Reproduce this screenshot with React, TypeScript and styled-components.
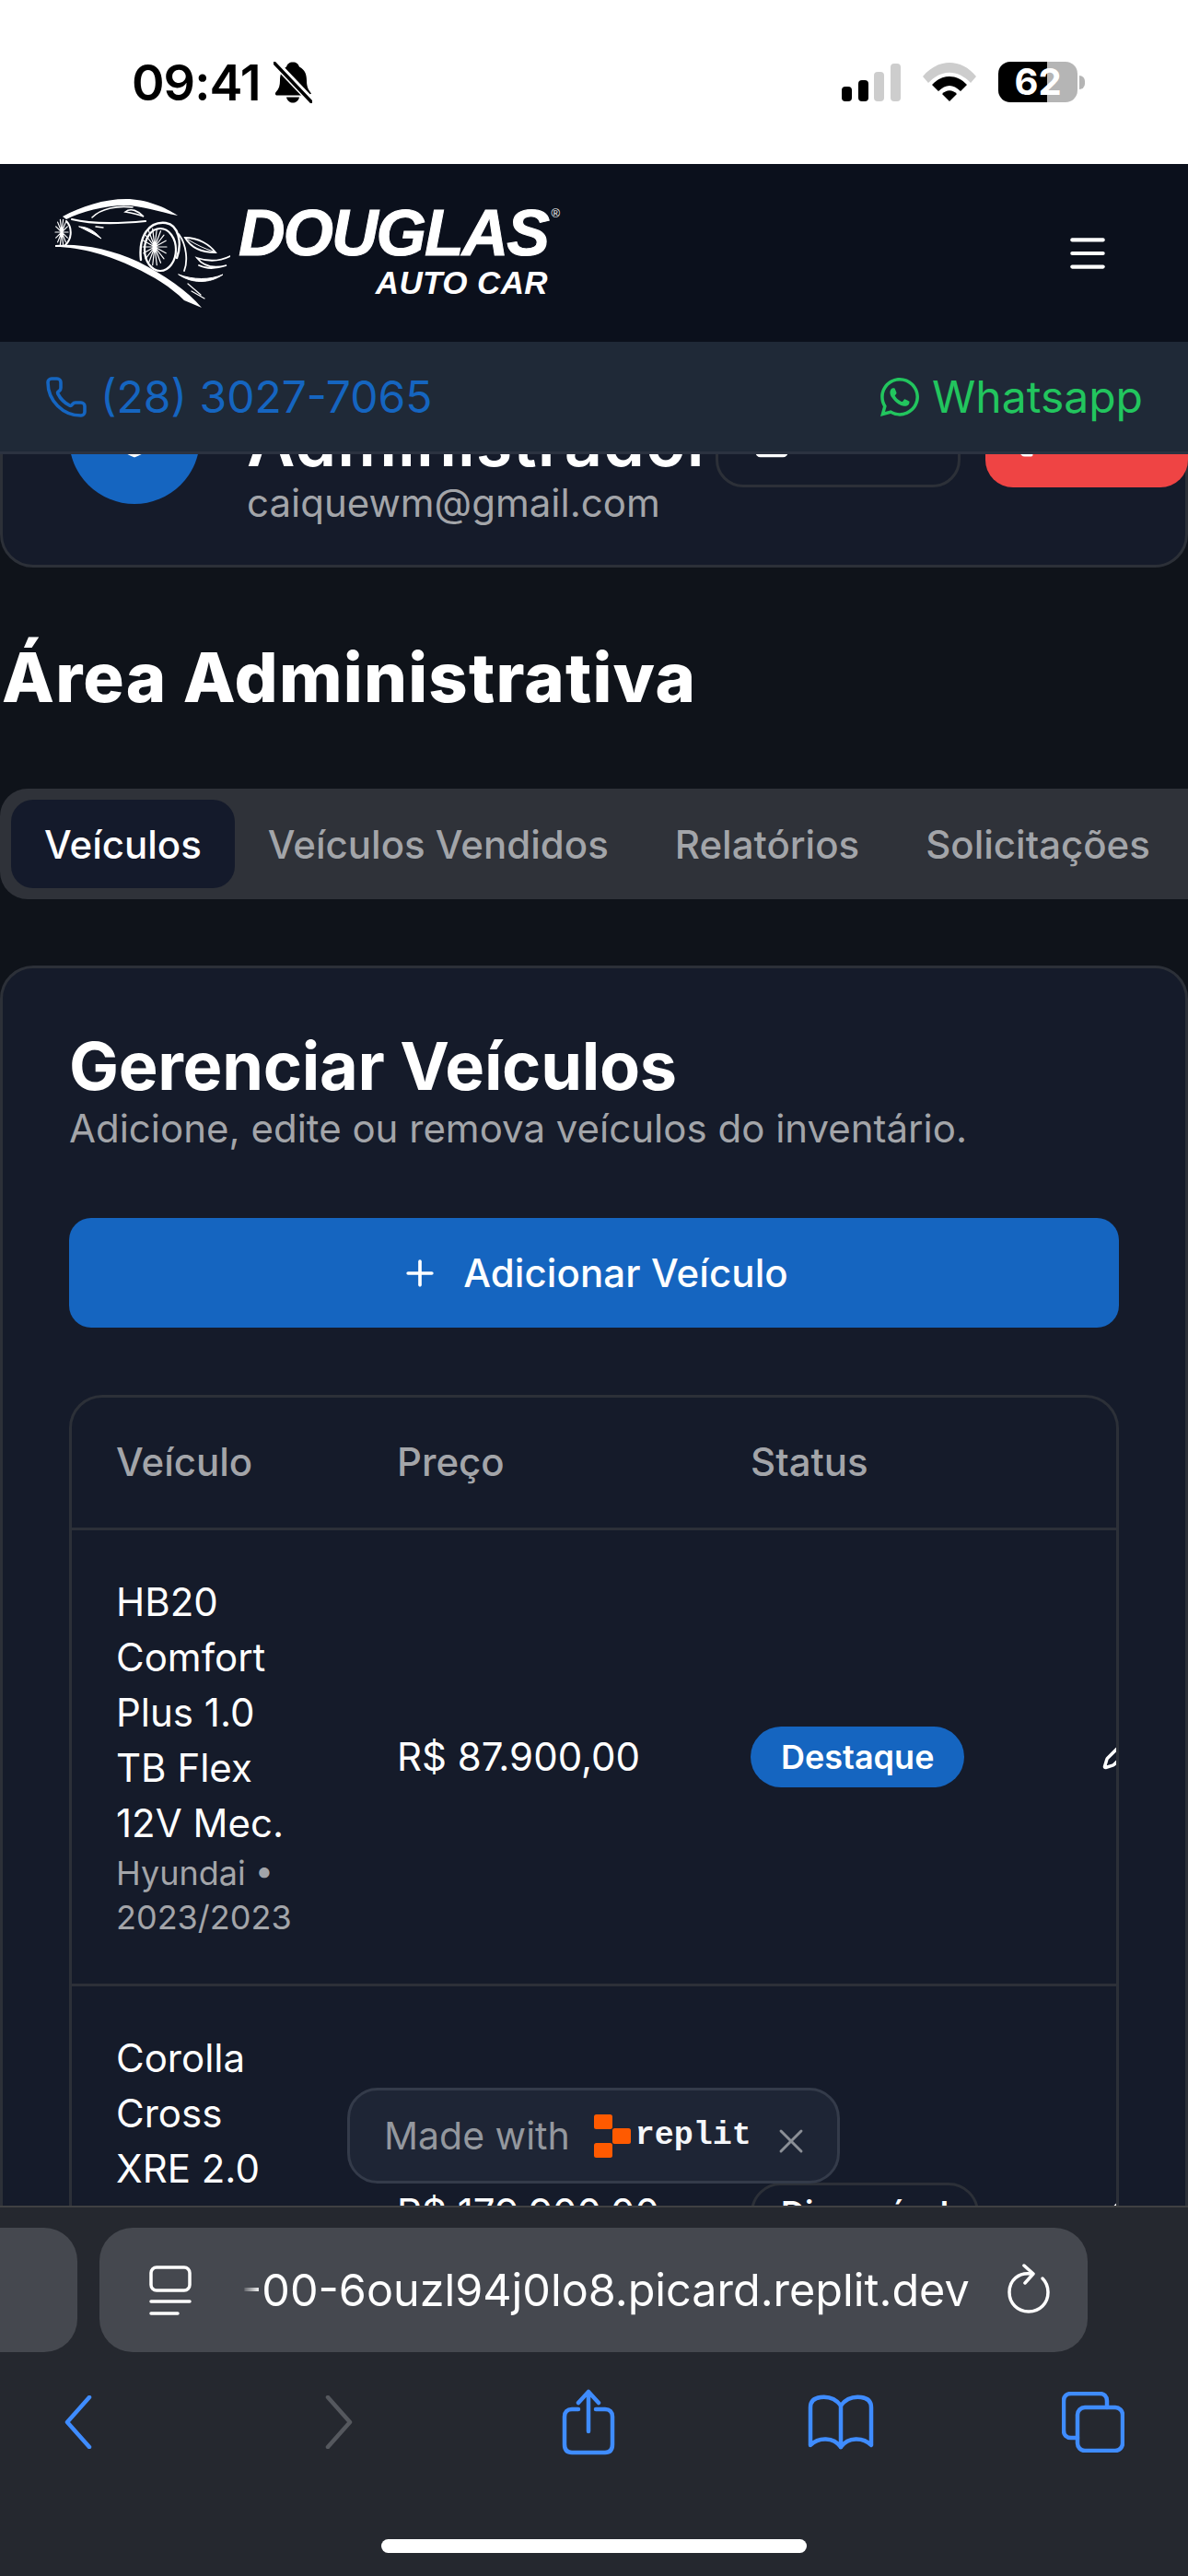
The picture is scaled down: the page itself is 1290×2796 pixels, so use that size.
import React from 'react';
import styled, { createGlobalStyle } from 'styled-components';
import { Lock, LogOut, Menu, Pencil, Phone, Plus, Shield, X } from 'lucide-react';
import { FaWhatsapp } from 'react-icons/fa';

const GlobalStyle = createGlobalStyle`
  html, body {
    margin: 0;
    padding: 0;
    background: #0f131a;
  }
  * {
    box-sizing: border-box;
  }
`;

const Screen = styled.div`
  position: relative;
  width: 1290px;
  height: 2796px;
  display: flex;
  flex-direction: column;
  overflow: hidden;
  background: #0f131a;
  color: #fff;
  font-family: Inter, 'Liberation Sans', sans-serif;
`;

const StatusBar = styled.div`
  height: 178px;
  flex: none;
  background: #fff;
  color: #000;
  display: flex;
  align-items: center;
  justify-content: space-between;
  padding: 0 112px 0 143px;
`;

const StatusGroup = styled.div<{ $gap: number }>`
  display: flex;
  align-items: center;
  gap: ${(p) => p.$gap}px;
`;

const Clock = styled.span`
  font-size: 54px;
  font-weight: 600;
  letter-spacing: -1px;
`;

const Battery = styled.div`
  position: relative;
  width: 86px;
  height: 44px;
  border-radius: 13px;
  overflow: hidden;
  background: linear-gradient(90deg, #000 0 62%, #b5b5b5 62% 100%);
  color: #fff;
  font-size: 40px;
  font-weight: 700;
  text-align: center;
  line-height: 44px;
`;

const BatteryNub = styled.div`
  width: 6px;
  height: 15px;
  margin-left: -22px;
  border-radius: 0 6px 6px 0;
  background: #b5b5b5;
`;

const Header = styled.header`
  height: 193px;
  flex: none;
  background: #0b101c;
  display: flex;
  align-items: center;
  justify-content: space-between;
  padding: 0 84px 0 58px;
`;

const Logo = styled.div`
  display: flex;
  align-items: center;
  gap: 9px;
`;

const Wordmark = styled.div`
  display: flex;
  flex-direction: column;
  align-items: flex-end;
  padding-top: 3px;
  font-family: 'Liberation Sans', Arial, sans-serif;
  font-weight: 700;
  font-style: italic;
`;

const WordmarkTop = styled.div`
  position: relative;
  font-size: 70px;
  line-height: 50px;
  letter-spacing: -2px;
  -webkit-text-stroke: 1px #fff;

  sup {
    position: absolute;
    top: -4px;
    right: -13px;
    font-size: 13px;
    line-height: 16px;
    font-style: normal;
    font-weight: 400;
    letter-spacing: 0;
    -webkit-text-stroke: 0;
  }
`;

const WordmarkBottom = styled.div`
  margin-top: 11px;
  font-size: 35px;
  line-height: 36px;
  letter-spacing: 0.4px;
`;

const MenuButton = styled.div`
  display: flex;
  color: #fff;
`;

const ContactBar = styled.div`
  height: 122px;
  flex: none;
  background: #1f2937;
  border-bottom: 3px solid #2b3240;
  display: flex;
  align-items: center;
  justify-content: space-between;
  padding: 0 49px 0 48px;
  font-size: 48px;
  position: relative;
  z-index: 2;
`;

const ContactLink = styled.div<{ $color: string; $gap: number }>`
  display: flex;
  align-items: center;
  gap: ${(p) => p.$gap}px;
  color: ${(p) => p.$color};
`;

const Main = styled.main`
  flex: 1;
  min-height: 0;
  overflow: hidden;
`;

const ProfileClip = styled.div`
  height: 123px;
  display: flex;
  flex-direction: column;
  justify-content: flex-end;
  overflow: hidden;
`;

const ProfileCard = styled.section`
  flex: none;
  height: 250px;
  background: #151b2a;
  border: 3px solid #2c3038;
  border-radius: 36px;
  display: flex;
  align-items: flex-start;
  padding: 36px 0 0 72px;
`;

const Avatar = styled.div`
  width: 142px;
  height: 142px;
  flex: none;
  border-radius: 50%;
  background: #1565c0;
  color: #fff;
  display: flex;
  align-items: center;
  justify-content: center;
`;

const ProfileInfo = styled.div`
  width: 509px;
  margin-left: 51px;
  padding-top: 40px;
  flex: none;
`;

const ProfileName = styled.div`
  font-size: 72px;
  line-height: 70px;
  margin-bottom: 1px;
  font-weight: 600;
  letter-spacing: 1px;
  white-space: nowrap;
`;

const ProfileEmail = styled.div`
  font-size: 42px;
  line-height: 60px;
  color: #a3a5a9;
`;

const ProfileActions = styled.div`
  display: flex;
  gap: 27px;
  flex: none;
  margin-top: 4px;
`;

const ProfileAction = styled.div<{ $danger?: boolean; $width: number }>`
  width: ${(p) => p.$width}px;
  height: 120px;
  border-radius: 30px;
  padding: ${(p) => (p.$danger ? '48px 0 0 34px' : '44px 0 0 37px')};
  color: #fff;
  background: ${(p) => (p.$danger ? '#ef4444' : 'transparent')};
  border: ${(p) => (p.$danger ? 'none' : '3px solid #2c3038')};
`;

const PageTitle = styled.h1`
  margin: 71px 0 0;
  padding-left: 2px;
  font-size: 74px;
  line-height: 96px;
  font-weight: 800;
  letter-spacing: 1.2px;
`;

const Tabs = styled.nav`
  margin-top: 73px;
  height: 120px;
  background: #2f3239;
  border-radius: 30px 0 0 30px;
  display: flex;
  align-items: center;
  padding-left: 12px;
`;

const Tab = styled.div<{ $active?: boolean }>`
  height: 96px;
  display: flex;
  align-items: center;
  padding: 0 36px;
  border-radius: 24px;
  font-size: 42px;
  font-weight: 500;
  white-space: nowrap;
  background: ${(p) => (p.$active ? '#141a2b' : 'transparent')};
  color: ${(p) => (p.$active ? '#fff' : '#a3a5a9')};
`;

const Panel = styled.section`
  margin-top: 72px;
  background: #151b2a;
  border: 3px solid #2c3038;
  border-radius: 36px;
  padding: 71px 72px 0;
`;

const PanelTitle = styled.h2`
  margin: 0;
  font-size: 72px;
  line-height: 70px;
  font-weight: 700;
  letter-spacing: -0.3px;
`;

const PanelSubtitle = styled.p`
  margin: 3px 0 0;
  font-size: 42px;
  line-height: 60px;
  color: #a3a5a9;
`;

const AddButton = styled.div`
  margin-top: 67px;
  height: 119px;
  background: #1565c0;
  border-radius: 24px;
  display: flex;
  align-items: center;
  justify-content: center;
  gap: 25px;
  font-size: 42px;
  font-weight: 500;
  letter-spacing: 0.1px;
`;

const TableFrame = styled.div`
  margin-top: 73px;
  border: 3px solid #2c3038;
  border-radius: 36px;
  overflow: hidden;
`;

const Table = styled.table`
  width: 1270px;
  table-layout: fixed;
  border-collapse: separate;
  border-spacing: 0;
`;

const HeadCell = styled.th`
  height: 144px;
  padding: 0 48px 2px;
  text-align: left;
  font-size: 42px;
  font-weight: 500;
  color: #a3a5a9;
  border-bottom: 3px solid #2c3038;
`;

const Cell = styled.td`
  padding: 48px;
  font-size: 42px;
  line-height: 60px;
  vertical-align: middle;
  border-bottom: 3px solid #2c3038;
`;

const VehicleName = styled.div`
  width: 195px;
`;

const Price = styled.span`
  white-space: nowrap;
`;

const VehicleMeta = styled.div`
  width: 195px;
  font-size: 36px;
  line-height: 48px;
  color: #a3a5a9;
`;

const Badge = styled.span<{ $outline?: boolean }>`
  display: inline-block;
  height: 66px;
  padding: 0 ${(p) => (p.$outline ? 30 : 33)}px;
  border-radius: 33px;
  font-size: 36px;
  font-weight: 600;
  line-height: ${(p) => (p.$outline ? 60 : 66)}px;
  white-space: nowrap;
  background: ${(p) => (p.$outline ? 'transparent' : '#1565c0')};
  border: ${(p) => (p.$outline ? '3px solid #2c3038' : 'none')};
`;

const MadeWith = styled.div`
  position: absolute;
  left: 377px;
  top: 2266px;
  width: 535px;
  height: 104px;
  background: #1e2535;
  border: 3px solid #343b4a;
  border-radius: 33px;
  display: flex;
  align-items: center;
  padding-left: 37px;
  font-size: 41px;
  color: #94989e;
  z-index: 3;
`;

const ReplitName = styled.span`
  margin-left: 5px;
  font-family: 'Liberation Mono', monospace;
  font-size: 35px;
  font-weight: 700;
  color: #f5f7fa;
`;

const MadeWithClose = styled.div`
  display: flex;
  margin-left: 21px;
  margin-top: 11px;
  color: #8b8f96;
`;

const Safari = styled.div`
  height: 402px;
  flex: none;
  background: #25282f;
  border-top: 2px solid #3f4042;
  position: relative;
  z-index: 2;
`;

const AddressRow = styled.div`
  margin-top: 22px;
  display: flex;
  gap: 24px;
`;

const TabSliver = styled.div`
  width: 84px;
  height: 135px;
  background: #45484f;
  border-radius: 0 36px 36px 0;
`;

const AddressBar = styled.div`
  width: 1073px;
  height: 135px;
  background: #45484f;
  border-radius: 36px;
  display: flex;
  align-items: center;
  padding-left: 54px;
`;

const AddressText = styled.div`
  width: 795px;
  margin-left: 54px;
  margin-right: 37px;
  font-size: 48.5px;
  white-space: nowrap;
  overflow: hidden;
  -webkit-mask-image: linear-gradient(90deg, transparent 0, #000 20px);
  mask-image: linear-gradient(90deg, transparent 0, #000 20px);
`;

const ToolbarIcons = styled.div`
  margin: 21px 0 0 -46px;
  height: 110px;
  display: grid;
  grid-template-columns: repeat(5, 274px);
  justify-items: center;
  align-items: center;
`;

const HomeIndicator = styled.div`
  width: 462px;
  height: 15px;
  margin: 72px auto 0;
  background: #fff;
  border-radius: 8px;
`;

function CarDrawing() {
  const spokes = (cx: number, cy: number, rx: number, ry: number, n: number) =>
    Array.from({ length: n }, (_, i) => {
      const a = (i / n) * Math.PI * 2;
      return `M${cx} ${cy}L${(cx + Math.cos(a) * rx).toFixed(1)} ${(cy + Math.sin(a) * ry).toFixed(1)}`;
    }).join('');
  return (
    <svg width="192" height="118" viewBox="0 0 192 118" fill="none" stroke="#fff" strokeLinecap="round">
      <path d="M10 19C30 8 55 0 79 0C100 0 122 9 135 18C115 14 95 7 78 7C55 7 30 14 14 22Z" fill="#fff" stroke="none" />
      <path d="M42 20C52 10 70 7 86 9" strokeWidth="1.6" />
      <path d="M78 14C84 9 92 13 98 19C90 16 84 15 78 14Z" strokeWidth="1.6" />
      <path d="M20 22C40 27 70 27 100 24" strokeWidth="2.2" />
      <path d="M28 30C38 30 46 36 52 43C44 38 36 34 28 30Z" fill="#fff" strokeWidth="1" />
      <path d="M46 30L54 31" strokeWidth="1.4" />
      <path d="M14 24C20 30 21 42 13 50" strokeWidth="2" />
      <path d={spokes(9, 36, 7, 14, 14)} strokeWidth="1.2" />
      <path d="M2 52C30 52 62 62 87 74C109 84 128 96 142 110L161 118C146 100 120 82 92 68C62 54 30 48 2 50Z" fill="#fff" stroke="none" />
      <path d="M150 100L164 108M146 92L160 104" strokeWidth="1.2" />
      <path d="M95 66C92 40 104 24 122 26C136 28 140 48 134 64" strokeWidth="2.4" />
      <ellipse cx="116" cy="55" rx="17" ry="23" strokeWidth="2.2" />
      <path d={spokes(110, 52, 13, 20, 18)} strokeWidth="1.2" />
      <path d="M143 42C158 42 170 50 176 58C162 58 150 54 143 42Z" strokeWidth="1.8" />
      <path d="M146 44C156 50 164 54 174 57" strokeWidth="1" />
      <path d="M136 38C145 50 146 68 142 78" strokeWidth="1.8" />
      <path d="M192 62C180 68 168 68 156 64C162 72 172 76 188 72C176 76 166 76 158 72" strokeWidth="1.8" />
      <path d="M136 82C152 88 170 88 184 82C170 92 150 92 136 82Z" fill="#fff" strokeWidth="1" />
    </svg>
  );
}

function SignalIcon() {
  return (
    <svg width="64" height="41" viewBox="0 0 64 41">
      <rect x="0" y="25" width="11" height="16" rx="4" fill="#000" />
      <rect x="18" y="18" width="11" height="23" rx="4" fill="#000" />
      <rect x="35" y="9" width="11" height="32" rx="4" fill="#cdcdcd" />
      <rect x="53" y="0" width="11" height="41" rx="4" fill="#cdcdcd" />
    </svg>
  );
}

function WifiIcon() {
  return (
    <svg width="58" height="42" viewBox="0 0 58 42">
      <path d="M0 15C16 -5 42 -5 58 15L52 22C38 7 20 7 6 22Z" fill="#cdcdcd" />
      <path d="M10 24C21 12 37 12 48 24L41 31C33 23 25 23 17 31Z" fill="#000" />
      <path d="M21 34C26 29 32 29 37 34L29 42Z" fill="#000" />
    </svg>
  );
}

function MutedBell() {
  return (
    <svg width="42" height="45" viewBox="0 0 42 44">
      <path d="M21 0C25 0 27 2 28 5C34 8 36 13 36 20C36 27 38 30 41 34L38 36H4C2 36 1 34 3 32C6 29 7 25 7 20C7 13 9 8 14 5C15 2 17 0 21 0Z" fill="#000" />
      <path d="M14 38H28C27 42 24 44 21 44C18 44 15 42 14 38Z" fill="#000" />
      <path d="M1 0L43 44" stroke="#fff" strokeWidth="8" />
      <path d="M1 1L41 43" stroke="#000" strokeWidth="3.6" strokeLinecap="round" />
    </svg>
  );
}

function ReplitMark() {
  return (
    <svg width="40" height="47" viewBox="0 0 40 47" fill="#ff5a00" style={{ marginLeft: 26 }}>
      <rect x="0" y="0" width="20" height="16" rx="2.5" />
      <rect x="20" y="15" width="20" height="17" rx="2.5" />
      <rect x="0" y="31" width="20" height="16" rx="2.5" />
    </svg>
  );
}

function ReaderIcon() {
  return (
    <svg width="46" height="54" viewBox="0 0 46 54" fill="none" stroke="#fff" strokeWidth="3.5" strokeLinecap="round">
      <rect x="2" y="2" width="42" height="25" rx="6" />
      <path d="M2 39H44M2 52H31" />
    </svg>
  );
}

function ReloadIcon() {
  return (
    <svg width="46" height="54" viewBox="0 0 46 54" fill="none" stroke="#fff" strokeWidth="3.5" strokeLinecap="round" strokeLinejoin="round" style={{ marginTop: -4 }}>
      <path d="M26 11C12 9 2 18 2 31C2 43 11 52 23 52C35 52 44 43 44 31C44 25 42 20 38 16" />
      <path d="M18 2L28 11L19 21" />
    </svg>
  );
}

function BackIcon({ color, flip }: { color: string; flip?: boolean }) {
  return (
    <svg width="30" height="58" viewBox="0 0 30 58" fill="none" stroke={color} strokeWidth="4.5" strokeLinecap="round" strokeLinejoin="round" style={flip ? { transform: 'scaleX(-1)', marginLeft: 6 } : { marginRight: 12 }}>
      <path d="M27 2L3 29L27 56" />
    </svg>
  );
}

function ShareIcon() {
  return (
    <svg width="58" height="72" viewBox="0 0 58 72" fill="none" stroke="#3f8cff" strokeWidth="4.5" strokeLinecap="round" strokeLinejoin="round">
      <path d="M18 22H11C6 22 3 25 3 30V60C3 66 6 69 11 69H47C52 69 55 66 55 60V30C55 25 52 22 47 22H37" />
      <path d="M29 46V3M18 15L29 3L40 15" />
    </svg>
  );
}

function BookIcon() {
  return (
    <svg width="72" height="60" viewBox="0 0 72 60" fill="none" stroke="#3f8cff" strokeWidth="4.5" strokeLinecap="round" strokeLinejoin="round">
      <path d="M36 12C30 4 22 2 14 3C6 4 3 8 3 14V55C12 46 28 46 36 57C44 46 60 46 69 55V14C69 8 66 4 58 3C50 2 42 4 36 12Z" />
      <path d="M36 12V57" />
    </svg>
  );
}

function TabsIcon() {
  return (
    <svg width="68" height="66" viewBox="0 0 68 66" fill="none" stroke="#3f8cff" strokeWidth="4.5" strokeLinecap="round" strokeLinejoin="round">
      <path d="M17 50H10C5 50 2 47 2 42V10C2 5 5 2 10 2H41C46 2 49 5 49 10V17" />
      <rect x="17" y="17" width="49" height="47" rx="8" />
    </svg>
  );
}

function App() {
  return (
    <Screen>
      <GlobalStyle />
      <StatusBar>
        <StatusGroup $gap={15}>
          <Clock>09:41</Clock>
          <MutedBell />
        </StatusGroup>
        <StatusGroup $gap={24}>
          <SignalIcon />
          <WifiIcon />
          <Battery>62</Battery>
          <BatteryNub />
        </StatusGroup>
      </StatusBar>
      <Header>
        <Logo>
          <CarDrawing />
          <Wordmark>
            <WordmarkTop>
              DOUGLAS<sup>®</sup>
            </WordmarkTop>
            <WordmarkBottom>AUTO CAR</WordmarkBottom>
          </Wordmark>
        </Logo>
        <MenuButton>
          <Menu size={50} strokeWidth={2} />
        </MenuButton>
      </Header>
      <ContactBar>
        <ContactLink $color="#1565c0" $gap={13}>
          <Phone size={48} strokeWidth={1.8} />
          (28) 3027-7065
        </ContactLink>
        <ContactLink $color="#22c55e" $gap={11}>
          <FaWhatsapp size={48} />
          Whatsapp
        </ContactLink>
      </ContactBar>
      <Main>
        <ProfileClip>
          <ProfileCard>
            <Avatar>
              <Shield size={44} />
            </Avatar>
            <ProfileInfo>
              <ProfileName>Administrador</ProfileName>
              <ProfileEmail>caiquewm@gmail.com</ProfileEmail>
            </ProfileInfo>
            <ProfileActions>
              <ProfileAction $width={266}>
                <Lock size={42} />
              </ProfileAction>
              <ProfileAction $danger $width={220}>
                <LogOut size={42} />
              </ProfileAction>
            </ProfileActions>
          </ProfileCard>
        </ProfileClip>
        <PageTitle>Área Administrativa</PageTitle>
        <Tabs>
          <Tab $active>Veículos</Tab>
          <Tab>Veículos Vendidos</Tab>
          <Tab>Relatórios</Tab>
          <Tab>Solicitações</Tab>
        </Tabs>
        <Panel>
          <PanelTitle>Gerenciar Veículos</PanelTitle>
          <PanelSubtitle>Adicione, edite ou remova veículos do inventário.</PanelSubtitle>
          <AddButton>
            <Plus size={44} />
            Adicionar Veículo
          </AddButton>
          <TableFrame>
            <Table>
              <colgroup>
                <col width="305" />
                <col width="384" />
                <col width="381" />
                <col width="200" />
              </colgroup>
              <thead>
                <tr>
                  <HeadCell>Veículo</HeadCell>
                  <HeadCell>Preço</HeadCell>
                  <HeadCell>Status</HeadCell>
                  <HeadCell />
                </tr>
              </thead>
              <tbody>
                <tr>
                  <Cell>
                    <VehicleName>HB20 Comfort Plus 1.0 TB Flex 12V Mec.</VehicleName>
                    <VehicleMeta>Hyundai • 2023/2023</VehicleMeta>
                  </Cell>
                  <Cell>
                    <Price>R$ 87.900,00</Price>
                  </Cell>
                  <Cell>
                    <Badge>Destaque</Badge>
                  </Cell>
                  <Cell>
                    <Pencil size={42} />
                  </Cell>
                </tr>
                <tr>
                  <Cell>
                    <VehicleName>Corolla Cross XRE 2.0 16V Flex Aut.</VehicleName>
                    <VehicleMeta>Toyota • 2023/2023</VehicleMeta>
                  </Cell>
                  <Cell>
                    <Price>R$ 179.900,00</Price>
                  </Cell>
                  <Cell>
                    <Badge $outline>Disponível</Badge>
                  </Cell>
                  <Cell>
                    <Pencil size={42} />
                  </Cell>
                </tr>
              </tbody>
            </Table>
          </TableFrame>
        </Panel>
      </Main>
      <MadeWith>
        Made with
        <ReplitMark />
        <ReplitName>replit</ReplitName>
        <MadeWithClose>
          <X size={44} strokeWidth={1.6} />
        </MadeWithClose>
      </MadeWith>
      <Safari>
        <AddressRow>
          <TabSliver />
          <AddressBar>
            <ReaderIcon />
            <AddressText>-00-6ouzl94j0lo8.picard.replit.dev</AddressText>
            <ReloadIcon />
          </AddressBar>
        </AddressRow>
        <ToolbarIcons>
          <BackIcon color="#3f8cff" />
          <BackIcon color="#55585e" flip />
          <ShareIcon />
          <BookIcon />
          <TabsIcon />
        </ToolbarIcons>
        <HomeIndicator />
      </Safari>
    </Screen>
  );
}

export default App;
